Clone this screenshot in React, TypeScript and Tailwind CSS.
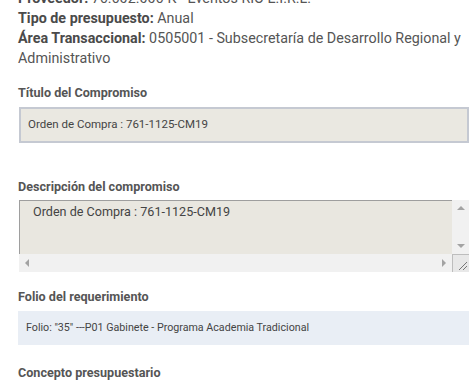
import React from 'react';

const Label: React.FC<{ children: React.ReactNode; className?: string }> = ({ children, className }) => (
  <h3 className={`text-[12.6px] leading-[16px] font-bold text-[#555] ${className ?? ''}`}>{children}</h3>
);

const Arrow: React.FC<{ dir: 'up' | 'down' | 'left' | 'right' }> = ({ dir }) => {
  const pts = {
    up: '0,4 4,0 8,4',
    down: '0,0 8,0 4,4',
    left: '4,0 4,8 0,4',
    right: '0,0 0,8 4,4',
  }[dir];
  const vertical = dir === 'up' || dir === 'down';
  return (
    <svg width={vertical ? 8 : 4} height={vertical ? 4 : 8} viewBox={vertical ? '0 0 8 4' : '0 0 4 8'}>
      <polygon points={pts} fill="#a3a3a3" />
    </svg>
  );
};

export default function App() {
  return (
    <div className="w-[475px] h-[380px] overflow-hidden bg-white font-['Roboto',sans-serif] text-[#555]">
      <div className="pl-[18px] pr-[6px] -mt-[12px]">
        {/* Datos generales */}
        <div className="text-[14.3px] leading-[20px]">
          <p><span className="font-bold text-[#4a4a4a]">Proveedor:</span> 76.602.006-K - Eventos RIO E.I.R.L.</p>
          <p><span className="font-bold text-[#4a4a4a]">Tipo de presupuesto:</span> Anual</p>
          <p>
            <span className="font-bold text-[#4a4a4a]">Área Transaccional:</span> 0505001 - Subsecretaría de Desarrollo Regional y Administrativo
          </p>
        </div>

        <Label className="mt-[17px]">Título del Compromiso</Label>
        <div className="mt-[6px] ml-px h-[36px] flex items-center border-2 border-[#c5c9d2] bg-[#eae8e1] pl-[7px] text-[11.5px] text-[#444]">
          Orden de Compra : 761-1125-CM19
        </div>

        <Label className="mt-[36px]">Descripción del compromiso</Label>
        <div className="mt-[5px] ml-px flex flex-col">
          <div className="flex h-[54px]">
            <div className="flex-1 bg-[#e9e7e0] border-t border-l border-[#9e9e9e] pl-[13px] pt-[3px] text-[12.6px] leading-[16px] text-[#444]">
              Orden de Compra : 761-1125-CM19
            </div>
            <div className="w-[17px] bg-[#f1f1f1] flex flex-col items-center justify-between py-[6px]">
              <Arrow dir="up" />
              <Arrow dir="down" />
            </div>
          </div>
          <div className="flex h-[18px]">
            <div className="flex-1 bg-[#f1f1f1] flex items-center justify-between px-[6px]">
              <Arrow dir="left" />
              <Arrow dir="right" />
            </div>
            <div className="w-[17px] bg-[#e8e8e8] border-t border-l border-[#bdbdbd] flex items-end justify-end p-[2px]">
              <svg width="9" height="9" viewBox="0 0 9 9">
                <line x1="1" y1="9" x2="9" y2="1" stroke="#777" strokeWidth="1" />
                <line x1="5" y1="9" x2="9" y2="5" stroke="#777" strokeWidth="1" />
              </svg>
            </div>
          </div>
        </div>

        <Label className="mt-[17px]">Folio del requerimiento</Label>
        <div className="mt-[6px] h-[34px] flex items-center bg-[#e9eef5] pl-[8px] text-[10.7px] text-[#444]">
          Folio: "35" ---P01 Gabinete - Programa Academia Tradicional
        </div>

        <Label className="mt-[20px]">Concepto presupuestario</Label>
      </div>
    </div>
  );
}
